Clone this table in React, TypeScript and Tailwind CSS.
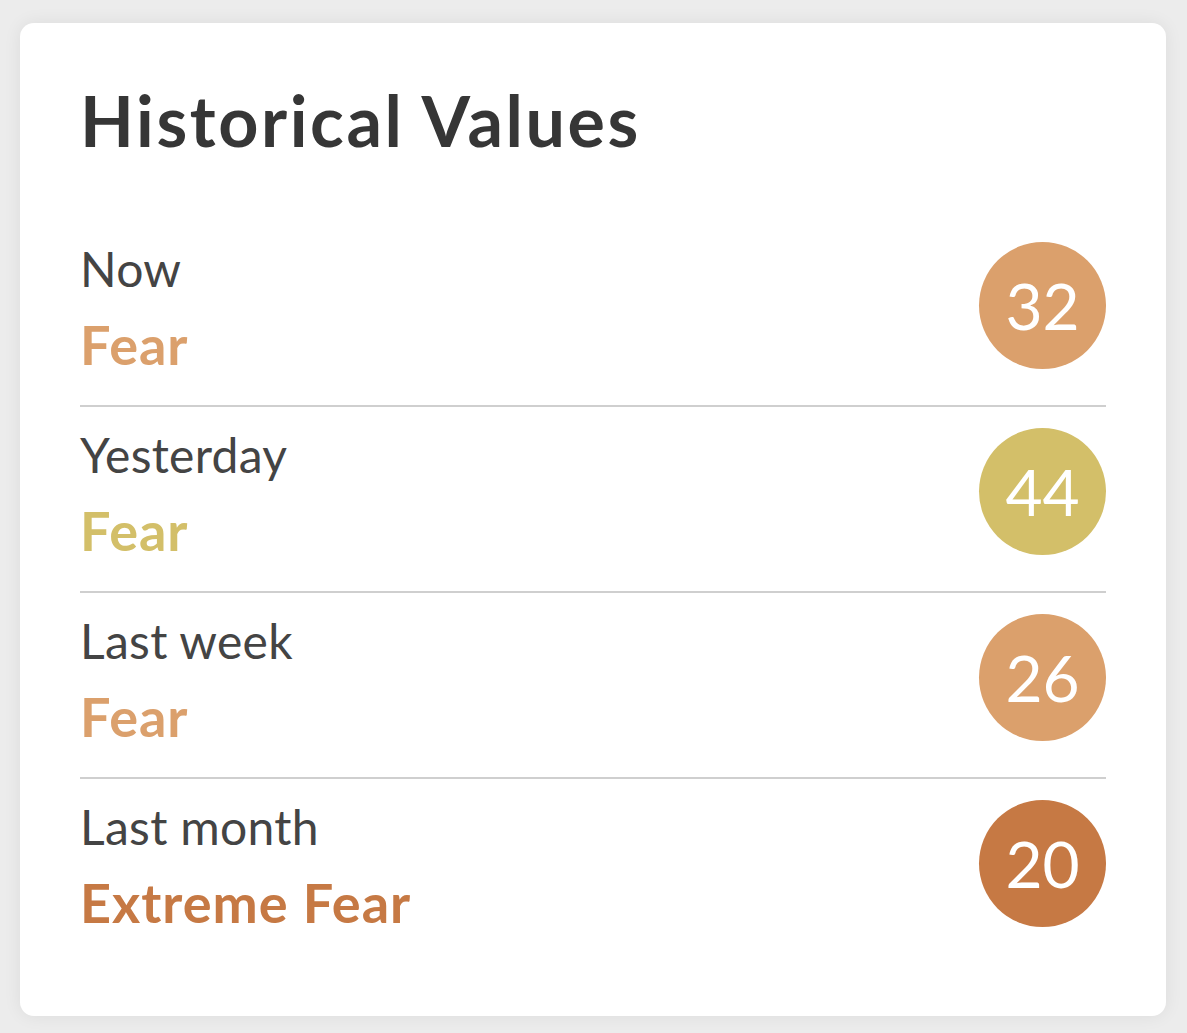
import React from "react";

const rows = [
  { label: "Now", status: "Fear", value: 32, color: "#dba06c" },
  { label: "Yesterday", status: "Fear", value: 44, color: "#d3bf69" },
  { label: "Last week", status: "Fear", value: 26, color: "#dba06c" },
  { label: "Last month", status: "Extreme Fear", value: 20, color: "#c67944" },
];

export default function App() {
  return (
    <div
      className="min-h-[1033px] w-[1187px] bg-[#ececec] pt-[23px] pl-[20px]"
      style={{ fontFamily: "Lato, 'Noto Sans', sans-serif" }}
    >
      <div className="w-[1146px] h-[993px] rounded-[14px] bg-white shadow-[0_0_18px_rgba(0,0,0,0.07)] pt-[62px] pl-[60px] pr-[60px]">
        <h1 className="text-[70px] leading-none font-bold text-[#363636] mb-[66px] tracking-[2.6px]">
          Historical Values
        </h1>
        <div className="flex flex-col">
          {rows.map((r, i) => (
            <div key={r.label}>
              {i > 0 && <div className="h-[2px] bg-[#cfcfcf]" />}
              <div className="h-[184px] flex justify-between items-start">
                <div className="flex flex-col pt-[24px]">
                  <div className="text-[48px] leading-none text-[#444444] tracking-[0.3px]">{r.label}</div>
                  <div
                    className="text-[54px] leading-none font-bold mt-[25px] tracking-[1px]"
                    style={{ color: r.color }}
                  >
                    {r.status}
                  </div>
                </div>
                <div
                  className="mt-[21px] w-[127px] h-[127px] rounded-full flex items-center justify-center text-white text-[64px] leading-none"
                  style={{ backgroundColor: r.color }}
                >
                  {r.value}
                </div>
              </div>
            </div>
          ))}
        </div>
      </div>
    </div>
  );
}
